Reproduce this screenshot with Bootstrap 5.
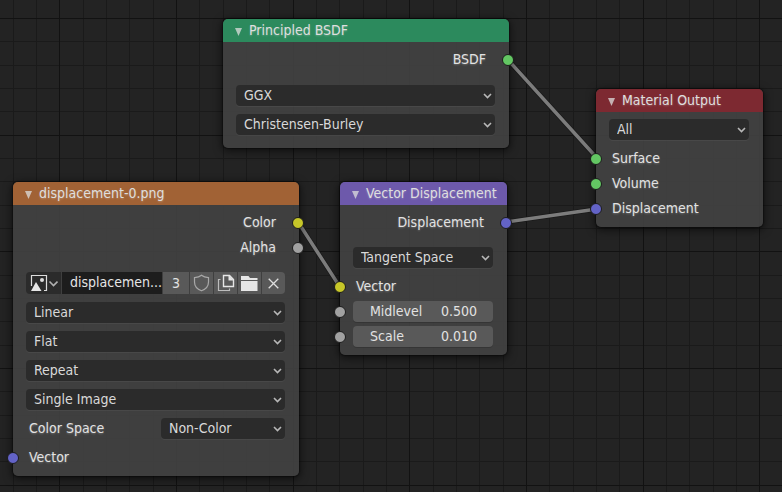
<!DOCTYPE html>
<html lang="en" data-bs-theme="dark">
<head>
<meta charset="utf-8">
<meta name="viewport" content="width=device-width, initial-scale=1">
<title>Shader Editor</title>
<link href="https://cdn.jsdelivr.net/npm/bootstrap@5.3.0/dist/css/bootstrap.min.css" rel="stylesheet">
<style>
  body {
    font: 14px/21px "DejaVu Sans Condensed", "DejaVu Sans", sans-serif;
    color: #e2e2e2;
    background: #232323;
  }
  /* minor lines repeat every 70px (three cells), major lines every 350px */
  .node-canvas {
    background-color: #232323;
    background-image:
      linear-gradient(90deg, #121212 1px, transparent 1px 117px, #121212 117px 118px, transparent 118px 234px, #121212 234px 235px, transparent 235px),
      linear-gradient(#121212 1px, transparent 1px 117px, #121212 117px 118px, transparent 118px 233px, #121212 233px 234px, transparent 234px),
      linear-gradient(90deg, #1a1a1a 1px, transparent 1px 24px, #1a1a1a 24px 25px, transparent 25px 47px, #1a1a1a 47px 48px, transparent 48px),
      linear-gradient(#1a1a1a 1px, transparent 1px 23px, #1a1a1a 23px 24px, transparent 24px 47px, #1a1a1a 47px 48px, transparent 48px);
    background-size: 350px 350px, 350px 350px, 70px 70px, 70px 70px;
    background-position: 59px 18px;
  }
  .node {
    background: rgba(67, 67, 67, .9);
    border-radius: 5px;
    box-shadow: 0 2px 8px 1px rgba(0, 0, 0, .6), 0 0 1px 1px rgba(0, 0, 0, .35);
    width: 167px;
    padding-bottom: 6px;
  }
  .node-wide { width: 286px; }
  .node-bsdf { left: 223px; top: 19px; padding-bottom: 13px; }
  .node-image { left: 13px; top: 182px; }
  .node-vector { left: 340px; top: 182px; }
  .node-output { left: 596px; top: 89px; }

  .node-title {
    height: 23px;
    padding-left: 12px;
    border-radius: 5px 5px 0 0;
    font-size: inherit;
    font-weight: 400;
    line-height: 23px;
    color: #dedede;
  }
  .node-title button { width: 14px; height: 25px; color: inherit; opacity: .75; }
  .title-shader { background: #2c8a5d; }
  .title-texture { background: #a16235; }
  .title-vector { background: #6d59ab; }
  .title-output { background: #7d2931; }

  .node-out { padding: 5px 23px 12px 0; }
  .node-bsdf .node-out { padding-bottom: 13px; }
  .node-controls { padding: 0 14px 0 13px; gap: 8px; }
  .node-output .node-controls { padding-top: 7px; }
  .node-in { padding-top: 6px; }
  .socket-row { height: 25px; line-height: 25px; padding-left: 16px; }
  .node-out .socket-row { text-align: right; padding: 0; }
  .socket-field { padding: 2px 14px 2px 13px; }
  .glow { text-shadow: 0 1px 2px rgba(255, 255, 255, .25); }

  .socket {
    width: 12px;
    height: 12px;
    top: 7px;
    left: -6px;
    border: 1px solid #1c1c1c;
    border-radius: 50%;
  }
  .node-out .socket { left: auto; right: -28px; }
  .socket-shader { background: #63c763; }
  .socket-color { background: #c7c729; }
  .socket-value { background: #a1a1a1; }
  .socket-vec { background: #6363c7; }

  .form-select.menu {
    height: 21px;
    padding: 0 20px 0 8px;
    font-size: inherit;
    line-height: 21px;
    color: #d9d9d9;
    border: 0;
    border-radius: 4px;
    background: #2b2b2b url("data:image/svg+xml,%3Csvg xmlns='http://www.w3.org/2000/svg' viewBox='0 0 9 6'%3E%3Cpath d='M1 1l3.5 3.5L8 1' fill='none' stroke='%23b8b8b8' stroke-width='1.6'/%3E%3C/svg%3E") no-repeat right 3px center / 9px 6px;
    box-shadow: 0 1px 0 rgba(255, 255, 255, .05);
  }
  .menu-space { width: 124px; }
  .label-space { padding-left: 3px; }

  .num-field {
    height: 21px;
    line-height: 21px;
    padding: 0 16px 0 17px;
    background: #595959;
    border-radius: 4px;
    box-shadow: 0 1px 0 rgba(0, 0, 0, .15);
  }
  .num-field input { min-width: 0; width: 44px; font: inherit; color: inherit; }

  .id-block { gap: 1px; height: 22px; }
  .id-block button { background: #595959; color: #e2e2e2; width: 23px; }
  .id-block .id-browse { background: #2b2b2b; width: 35px; border-radius: 4px 0 0 4px; }
  .id-block .id-users { width: 26px; font-size: inherit; line-height: 20px; }
  .id-block .id-unlink { border-radius: 0 4px 4px 0; }
  .id-block input { background: #1d1d1d; color: #e6e6e6; min-width: 0; padding: 0 0 1px 8px; font: inherit; }
</style>
<script src="https://cdn.jsdelivr.net/npm/bootstrap@5.3.0/dist/js/bootstrap.bundle.min.js"></script>
</head>
<body>
<main class="node-canvas position-relative min-vh-100 overflow-hidden">

  <svg class="position-absolute top-0 start-0 w-100 h-100" fill="none" aria-hidden="true">
    <g stroke="#1a1a1a" stroke-width="5">
      <path d="M508 60L597 158M298 222L340 287M506 222L597 209"/>
    </g>
    <g stroke="#7c7c7c" stroke-width="3.5">
      <path d="M508 60L597 158M298 222L340 287M506 222L597 209"/>
    </g>
  </svg>

  <section class="node node-wide node-bsdf position-absolute">
    <h2 class="node-title title-shader d-flex m-0 glow">
      <button type="button" class="btn p-0 border-0 d-flex align-items-center" aria-label="Collapse"><svg width="7" height="8" fill="currentColor"><path d="M0 0H7L3.5 8Z"/></svg></button>
      <span>Principled BSDF</span>
    </h2>
    <div class="node-out">
      <div class="socket-row position-relative glow">BSDF<i class="socket socket-shader position-absolute"></i></div>
    </div>
    <div class="node-controls d-flex flex-column">
      <select class="form-select menu" aria-label="Distribution"><option>GGX</option></select>
      <select class="form-select menu" aria-label="Subsurface method"><option>Christensen-Burley</option></select>
    </div>
  </section>

  <section class="node node-output position-absolute">
    <h2 class="node-title title-output d-flex m-0 glow">
      <button type="button" class="btn p-0 border-0 d-flex align-items-center" aria-label="Collapse"><svg width="7" height="8" fill="currentColor"><path d="M0 0H7L3.5 8Z"/></svg></button>
      <span>Material Output</span>
    </h2>
    <div class="node-controls d-flex flex-column">
      <select class="form-select menu" aria-label="Target"><option>All</option></select>
    </div>
    <div class="node-in">
      <div class="socket-row position-relative glow">Surface<i class="socket socket-shader position-absolute"></i></div>
      <div class="socket-row position-relative glow">Volume<i class="socket socket-shader position-absolute"></i></div>
      <div class="socket-row position-relative glow">Displacement<i class="socket socket-vec position-absolute"></i></div>
    </div>
  </section>

  <section class="node node-wide node-image position-absolute">
    <h2 class="node-title title-texture d-flex m-0 glow">
      <button type="button" class="btn p-0 border-0 d-flex align-items-center" aria-label="Collapse"><svg width="7" height="8" fill="currentColor"><path d="M0 0H7L3.5 8Z"/></svg></button>
      <span>displacement-0.png</span>
    </h2>
    <div class="node-out">
      <div class="socket-row position-relative glow">Color<i class="socket socket-color position-absolute"></i></div>
      <div class="socket-row position-relative glow">Alpha<i class="socket socket-value position-absolute"></i></div>
    </div>
    <div class="node-controls d-flex flex-column">
      <div class="id-block d-flex">
        <button type="button" class="id-browse btn p-0 border-0 d-flex align-items-center justify-content-center flex-shrink-0" aria-label="Browse image">
          <svg width="29" height="18" viewBox="0 0 29 18" fill="none"><path d="M2.5 12V1.5H17.5V16.5H15" stroke="#dcdcdc" stroke-width="1.2"/><path d="M2 17L7 8L12.500 17Z" fill="#e6e6e6"/><circle cx="13" cy="6" r="2" fill="#dcdcdc"/><path d="M20.500 7.500L24.500 11.500L28.500 7.500" stroke="#b0b0b0" stroke-width="1.600"/></svg>
        </button>
        <input type="text" class="border-0 flex-fill rounded-0" value="displacemen..." aria-label="Image name">
        <button type="button" class="id-users btn p-0 border-0 rounded-0 flex-shrink-0">3</button>
        <button type="button" class="btn p-0 border-0 rounded-0 d-flex align-items-center justify-content-center flex-shrink-0" aria-label="Fake user">
          <svg width="17" height="18" viewBox="0 0 17 18" fill="none" stroke="#a8a8a8" stroke-width="1.200"><path d="M8.500 1.200C6.500 3 4 3.500 1.500 3.600V8C1.500 12.500 5 15.500 8.500 16.800C12 15.500 15.500 12.500 15.500 8V3.600C13 3.500 10.500 3 8.500 1.200Z"/></svg>
        </button>
        <button type="button" class="btn p-0 border-0 rounded-0 d-flex align-items-center justify-content-center flex-shrink-0" aria-label="New image">
          <svg width="18" height="18" viewBox="0 0 18 18" fill="none"><path d="M3.500 5.500H1.500V16.500H12.500V14.500" stroke="#bdbdbd" stroke-width="1.200"/><path d="M6.500 1.500H12.500L16.500 5.500V12.500H6.500Z" stroke="#e6e6e6" stroke-width="1.400"/><path d="M11.500 1V6.500H17Z" fill="#e6e6e6"/></svg>
        </button>
        <button type="button" class="btn p-0 border-0 rounded-0 d-flex align-items-center justify-content-center flex-shrink-0" aria-label="Open image">
          <svg width="17" height="18" viewBox="0 0 17 18" fill="#e6e6e6"><path d="M0 2H7.500L9 4H16.500V6H0Z"/><path d="M0 7H16.500V17H0Z"/></svg>
        </button>
        <button type="button" class="id-unlink btn p-0 border-0 d-flex align-items-center justify-content-center flex-shrink-0" aria-label="Unlink">
          <svg width="11" height="11" viewBox="0 0 11 11" fill="none" stroke="#dedede" stroke-width="1.300"><path d="M.7.7L10.300 10.300M10.300.7L.7 10.300"/></svg>
        </button>
      </div>
      <select class="form-select menu" aria-label="Interpolation"><option>Linear</option></select>
      <select class="form-select menu" aria-label="Projection"><option>Flat</option></select>
      <select class="form-select menu" aria-label="Extension"><option>Repeat</option></select>
      <select class="form-select menu" aria-label="Source"><option>Single Image</option></select>
      <div class="d-flex justify-content-between">
        <label class="label-space glow" for="space">Color Space</label>
        <select class="form-select menu menu-space" id="space"><option>Non-Color</option></select>
      </div>
    </div>
    <div class="node-in">
      <div class="socket-row position-relative glow">Vector<i class="socket socket-vec position-absolute"></i></div>
    </div>
  </section>

  <section class="node node-vector position-absolute">
    <h2 class="node-title title-vector d-flex m-0 glow">
      <button type="button" class="btn p-0 border-0 d-flex align-items-center" aria-label="Collapse"><svg width="7" height="8" fill="currentColor"><path d="M0 0H7L3.5 8Z"/></svg></button>
      <span class="text-nowrap">Vector Displacement</span>
    </h2>
    <div class="node-out">
      <div class="socket-row position-relative glow">Displacement<i class="socket socket-vec position-absolute"></i></div>
    </div>
    <div class="node-controls d-flex flex-column">
      <select class="form-select menu" aria-label="Space"><option>Tangent Space</option></select>
    </div>
    <div class="node-in">
      <div class="socket-row position-relative glow">Vector<i class="socket socket-color position-absolute"></i></div>
      <div class="socket-row socket-field position-relative">
        <div class="num-field d-flex justify-content-between"><label for="mid">Midlevel</label><input class="bg-transparent border-0 p-0 text-end" id="mid" type="text" value="0.500"></div>
        <i class="socket socket-value position-absolute"></i>
      </div>
      <div class="socket-row socket-field position-relative">
        <div class="num-field d-flex justify-content-between"><label for="scale">Scale</label><input class="bg-transparent border-0 p-0 text-end" id="scale" type="text" value="0.010"></div>
        <i class="socket socket-value position-absolute"></i>
      </div>
    </div>
  </section>
</main>
</body>
</html>
